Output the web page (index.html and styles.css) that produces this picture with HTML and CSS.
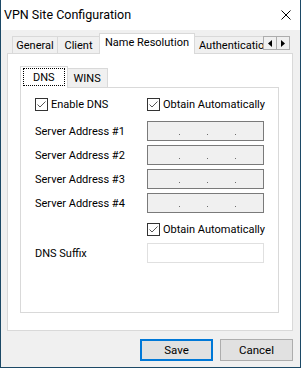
FILE: index.html
```html
<!DOCTYPE html>
<html lang="en">
  <head>
    <meta charset="UTF-8" />
    <title>VPN Site Configuration</title>
    <link rel="stylesheet" href="styles.css">
  </head>
  <body>
    <div class="window">
      <div class="titlebar">
        <span class="title">VPN Site Configuration</span>
        <svg class="close" viewBox="0 0 10 10">
          <path d="M0.5 0.5 L9.5 9.5 M9.5 0.5 L0.5 9.5" stroke="#000" stroke-width="1" fill="none" />
        </svg>
      </div>

      <div class="client">
        <div class="tabs">
          <div class="tab-list">
            <div class="tab tab-general">General</div>
            <div class="tab tab-client">Client</div>
            <div class="tab tab-names active">Name Resolution</div>
            <div class="tab tab-auth">Authentication</div>
          </div>
          <div class="tab-scroll">
            <span class="scroll-btn">
              <svg viewBox="0 0 4 7"><path d="M4 0 L0 3.5 L4 7 Z" fill="#000" /></svg>
            </span>
            <span class="scroll-btn">
              <svg viewBox="0 0 4 7"><path d="M0 0 L4 3.5 L0 7 Z" fill="#000" /></svg>
            </span>
          </div>
        </div>

        <div class="panel">
          <div class="subtabs">
            <div class="subtab active"><span class="focus">DNS</span></div>
            <div class="subtab">WINS</div>
          </div>

          <div class="subpanel">
            <div class="check-row">
              <label class="check check-wide">
                <span class="box">
                  <svg viewBox="0 0 11 11"><polyline points="1.5,5.5 4,8 9.5,2.5" /></svg>
                </span>
                Enable DNS
              </label>
              <label class="check">
                <span class="box">
                  <svg viewBox="0 0 11 11"><polyline points="1.5,5.5 4,8 9.5,2.5" /></svg>
                </span>
                Obtain Automatically
              </label>
            </div>

            <div class="addr-row">
              <span class="label">Server Address #1</span>
              <div class="ip"><i></i><i></i><i></i></div>
            </div>
            <div class="addr-row">
              <span class="label">Server Address #2</span>
              <div class="ip"><i></i><i></i><i></i></div>
            </div>
            <div class="addr-row">
              <span class="label">Server Address #3</span>
              <div class="ip"><i></i><i></i><i></i></div>
            </div>
            <div class="addr-row">
              <span class="label">Server Address #4</span>
              <div class="ip"><i></i><i></i><i></i></div>
            </div>

            <div class="check-row check-row-indent">
              <label class="check">
                <span class="box">
                  <svg viewBox="0 0 11 11"><polyline points="1.5,5.5 4,8 9.5,2.5" /></svg>
                </span>
                Obtain Automatically
              </label>
            </div>

            <div class="addr-row">
              <span class="label">DNS Suffix</span>
              <div class="text-input"></div>
            </div>
          </div>
        </div>

        <div class="buttons">
          <button class="btn btn-default">Save</button>
          <button class="btn">Cancel</button>
        </div>
      </div>
    </div>
  </body>
</html>
```

FILE: styles.css
```css
* {
  margin: 0;
  padding: 0;
  box-sizing: border-box;
}

body {
  font-family: Roboto, "Liberation Sans", sans-serif;
  font-size: 11px;
  color: #000;
  background: #f0f0f0;
}

.window {
  width: 301px;
  height: 368px;
  background: #f0f0f0;
  border: 1px solid #1c4966;
  border-top: none;
  display: flex;
  flex-direction: column;
}

/* title bar */

.titlebar {
  height: 30px;
  background: #fff;
  display: flex;
  align-items: center;
  justify-content: space-between;
  padding: 0 9px 2px 3px;
}

.title {
  font-size: 12.5px;
}

.close {
  width: 10px;
  height: 10px;
  margin-top: 2px;
}

.client {
  flex: 1;
  display: flex;
  flex-direction: column;
  padding: 3px 7px 0 6px;
}

/* main tab strip */

.tabs {
  display: flex;
  height: 21px;
  margin-bottom: -1px;
  padding-left: 5px;
  position: relative;
  z-index: 1;
}

.tab-list {
  flex: 1;
  min-width: 0;
  display: flex;
  align-items: flex-end;
  overflow: hidden;
}

.tab {
  flex: none;
  height: 17px;
  margin-bottom: 1px;
  margin-left: -1px;
  border: 1px solid #d9d9d9;
  border-bottom: none;
  background: #f0f0f0;
  display: flex;
  align-items: center;
  justify-content: center;
  white-space: nowrap;
  overflow: hidden;
}

.tab:first-child {
  margin-left: 0;
}

.tab.active {
  height: 21px;
  margin-bottom: 0;
  background: #fff;
  padding-bottom: 3px;
  position: relative;
  z-index: 1;
}

.tab-general { width: 46px; }
.tab-client { width: 43px; }
.tab-names { width: 96px; }
.tab-auth {
  width: 80px;
  justify-content: flex-start;
  padding-left: 4px;
}

.tab-scroll {
  display: flex;
  margin: 3px 3px 0 0;
}

.scroll-btn {
  width: 14px;
  height: 14px;
  border: 1px solid #adadad;
  background: #f0f0f0;
  display: flex;
  align-items: center;
  justify-content: center;
}

.scroll-btn + .scroll-btn {
  margin-left: -1px;
}

.scroll-btn svg {
  width: 4px;
  height: 7px;
}

/* panel */

.panel {
  height: 278px;
  background: #fff;
  border: 1px solid #d9d9d9;
  padding: 12px 13px 17px 12px;
  display: flex;
  flex-direction: column;
}

.subtabs {
  display: flex;
  align-items: flex-end;
  height: 22px;
  margin-bottom: -1px;
  position: relative;
  z-index: 1;
}

.subtab {
  height: 19px;
  margin-bottom: 1px;
  margin-left: -1px;
  padding: 0 6px;
  border: 1px solid #d9d9d9;
  border-bottom: none;
  background: #f0f0f0;
  display: flex;
  align-items: center;
}

.subtab.active {
  height: 22px;
  margin: 0;
  padding: 1px 2px 2px;
  background: #fff;
  position: relative;
  z-index: 1;
}

.focus {
  height: 100%;
  padding: 0 9px;
  border: 1px dotted #000;
  display: flex;
  align-items: center;
}

.subpanel {
  flex: 1;
  border: 1px solid #d9d9d9;
  padding: 10px 0 0 14px;
  display: flex;
  flex-direction: column;
}

/* fields */

.check-row {
  display: flex;
  height: 13px;
  margin-bottom: 10px;
}

.check-row-indent {
  padding-left: 112px;
  margin: 6px 0 7px;
}

.check {
  display: flex;
  align-items: center;
  gap: 3px;
  white-space: nowrap;
}

.check-wide {
  width: 112px;
}

.box {
  width: 13px;
  height: 13px;
  border: 1px solid #333;
  background: #fff;
  display: flex;
}

.box svg {
  width: 11px;
  height: 11px;
}

.box polyline {
  fill: none;
  stroke: #555;
  stroke-width: 1;
}

.addr-row {
  display: flex;
  align-items: center;
  height: 20px;
  margin-bottom: 4px;
}

.label {
  width: 112px;
}

.ip {
  width: 117px;
  height: 20px;
  border: 1px solid #7a7a7a;
  background: #f0f0f0;
  display: flex;
  align-items: flex-start;
  gap: 27px;
  padding: 12px 0 0 31px;
}

.ip i {
  width: 1px;
  height: 1px;
  background: #6d6d6d;
}

.text-input {
  width: 117px;
  height: 20px;
  border: 1px solid #e0e0e0;
  background: #fff;
}

/* buttons */

.buttons {
  display: flex;
  justify-content: flex-end;
  gap: 7px;
  margin-top: 8px;
}

.btn {
  width: 73px;
  height: 22px;
  border: 1px solid #adadad;
  background: #e1e1e1;
  font-family: Roboto, "Liberation Sans", sans-serif;
  font-size: 11.5px;
  color: #000;
}

.btn-default {
  border: 2px solid #0078d7;
}
```
